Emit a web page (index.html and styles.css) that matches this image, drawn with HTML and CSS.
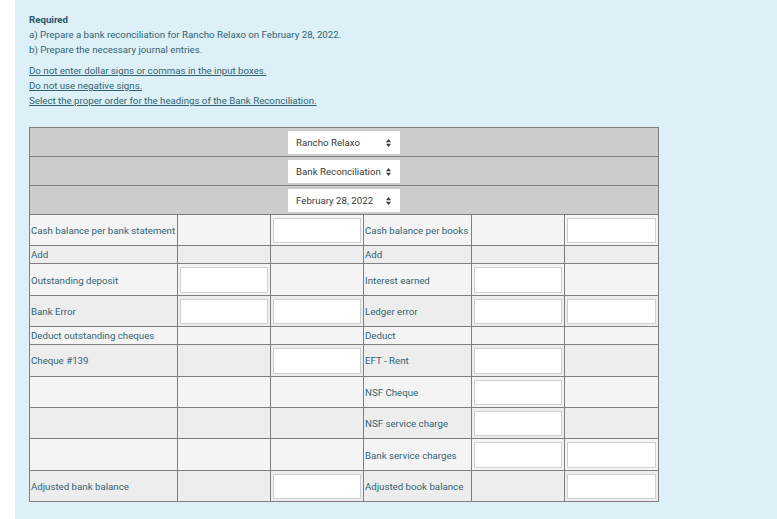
FILE: index.html
```html
<!DOCTYPE html>
<html lang="en">
<head>
<meta charset="utf-8">
<title>Bank Reconciliation</title>
<link rel="stylesheet" href="styles.css">
</head>
<body>
<div class="panel">
  <div class="instructions">
    <p class="req">Required</p>
    <p>a) Prepare a bank reconciliation for Rancho Relaxo on February 28, 2022.</p>
    <p>b) Prepare the necessary journal entries.</p>
  </div>
  <div class="notes">
    <p>Do not enter dollar signs or commas in the input boxes.</p>
    <p>Do not use negative signs.</p>
    <p>Select the proper order for the headings of the Bank Reconciliation.</p>
  </div>
  <table class="recon">
    <colgroup>
      <col class="w1"><col class="w2"><col class="w3"><col class="w4"><col class="w5"><col class="w6">
    </colgroup>
    <tr class="head"><td colspan="6">
      <label class="sel"><select><option>Rancho Relaxo</option></select><svg class="caret" viewBox="0 0 5 8" width="5" height="8"><path d="M0 3.2L2.5 0 5 3.2Z M0 4.8L2.5 8 5 4.8Z"/></svg></label>
    </td></tr>
    <tr class="head"><td colspan="6">
      <label class="sel"><select><option>Bank Reconciliation</option></select><svg class="caret" viewBox="0 0 5 8" width="5" height="8"><path d="M0 3.2L2.5 0 5 3.2Z M0 4.8L2.5 8 5 4.8Z"/></svg></label>
    </td></tr>
    <tr class="head"><td colspan="6">
      <label class="sel"><select><option>February 28, 2022</option></select><svg class="caret" viewBox="0 0 5 8" width="5" height="8"><path d="M0 3.2L2.5 0 5 3.2Z M0 4.8L2.5 8 5 4.8Z"/></svg></label>
    </td></tr>
    <tr class="light in">
      <td class="lbl">Cash balance per bank statement</td><td></td><td><input type="text"></td>
      <td class="lbl">Cash balance per books</td><td></td><td><input type="text"></td>
    </tr>
    <tr class="dark sub">
      <td class="lbl">Add</td><td></td><td></td>
      <td class="lbl">Add</td><td></td><td></td>
    </tr>
    <tr class="light in">
      <td class="lbl">Outstanding deposit</td><td><input type="text"></td><td></td>
      <td class="lbl">Interest earned</td><td><input type="text"></td><td></td>
    </tr>
    <tr class="dark in">
      <td class="lbl">Bank Error</td><td><input type="text"></td><td><input type="text"></td>
      <td class="lbl">Ledger error</td><td><input type="text"></td><td><input type="text"></td>
    </tr>
    <tr class="light sub">
      <td class="lbl">Deduct outstanding cheques</td><td></td><td></td>
      <td class="lbl">Deduct</td><td></td><td></td>
    </tr>
    <tr class="dark in">
      <td class="lbl">Cheque #139</td><td></td><td><input type="text"></td>
      <td class="lbl">EFT - Rent</td><td><input type="text"></td><td></td>
    </tr>
    <tr class="light in">
      <td class="lbl"></td><td></td><td></td>
      <td class="lbl">NSF Cheque</td><td><input type="text"></td><td></td>
    </tr>
    <tr class="dark in">
      <td class="lbl"></td><td></td><td></td>
      <td class="lbl">NSF service charge</td><td><input type="text"></td><td></td>
    </tr>
    <tr class="light in">
      <td class="lbl"></td><td></td><td></td>
      <td class="lbl">Bank service charges</td><td><input type="text"></td><td><input type="text"></td>
    </tr>
    <tr class="dark in">
      <td class="lbl">Adjusted bank balance</td><td></td><td><input type="text"></td>
      <td class="lbl">Adjusted book balance</td><td></td><td><input type="text"></td>
    </tr>
  </table>
</div>
</body>
</html>
```
FILE: styles.css
```css
html, body {
  margin: 0;
  padding: 0;
  background: #ffffff;
}
body {
  padding-left: 15px;
  font-family: Roboto, "Liberation Sans", sans-serif;
  font-size: 9.7px;
  color: #2f6473;
}
.panel {
  background: #def0f7;
  min-height: 519px;
  padding: 12px 14px 0 14px;
  box-sizing: border-box;
}
.instructions p,
.notes p {
  margin: 0;
  line-height: 15px;
  white-space: nowrap;
}
.req {
  font-weight: bold;
  color: #2a5767;
}
.notes {
  margin-top: 6px;
}
.notes p {
  text-decoration: underline;
  text-underline-offset: 1px;
}
.recon {
  margin-top: 19px;
  border-collapse: collapse;
  table-layout: fixed;
  width: 629px;
  border: 1px solid #7f7f7f;
}
.w1 { width: 148px; }
.w2 { width: 93px; }
.w3 { width: 93px; }
.w4 { width: 108px; }
.w5 { width: 93px; }
.w6 { width: 94px; }
.recon td {
  border: 1px solid #7f7f7f;
  padding: 0 2px;
  vertical-align: middle;
}
.head td {
  background: #cccccc;
  text-align: center;
  padding: 3px 0 2px;
  height: 23px;
}
.sel {
  position: relative;
  display: inline-block;
  vertical-align: top;
}
.sel select {
  appearance: none;
  -webkit-appearance: none;
  display: block;
  width: 112px;
  height: 23px;
  border: 0;
  border-radius: 0;
  background: #ffffff;
  padding: 0 8px;
  margin: 0;
  font-family: Roboto, "Liberation Sans", sans-serif;
  font-size: 9.7px;
  color: #3a3a3a;
}
.caret {
  position: absolute;
  right: 9px;
  top: 8px;
  fill: #3a3a3a;
  pointer-events: none;
}
.light td { background: #f4f4f4; }
.dark td { background: #ededed; }
.head td { background: #cccccc; }
.recon td.lbl {
  padding-left: 1px;
  padding-right: 0;
  white-space: nowrap;
  overflow: hidden;
  color: #2f6473;
}
.in td {
  padding-top: 3px;
  padding-bottom: 2px;
  height: 25.4px;
}
.sub td {
  padding-top: 2px;
  padding-bottom: 2px;
  height: 13px;
  line-height: 13px;
}
.recon input {
  display: block;
  box-sizing: border-box;
  width: 100%;
  height: 25.4px;
  margin: 0;
  padding: 0 4px;
  border: 1px solid #c9d2d8;
  border-radius: 0;
  background: #ffffff;
  font-family: Roboto, "Liberation Sans", sans-serif;
  font-size: 9.7px;
  outline: none;
}
```
